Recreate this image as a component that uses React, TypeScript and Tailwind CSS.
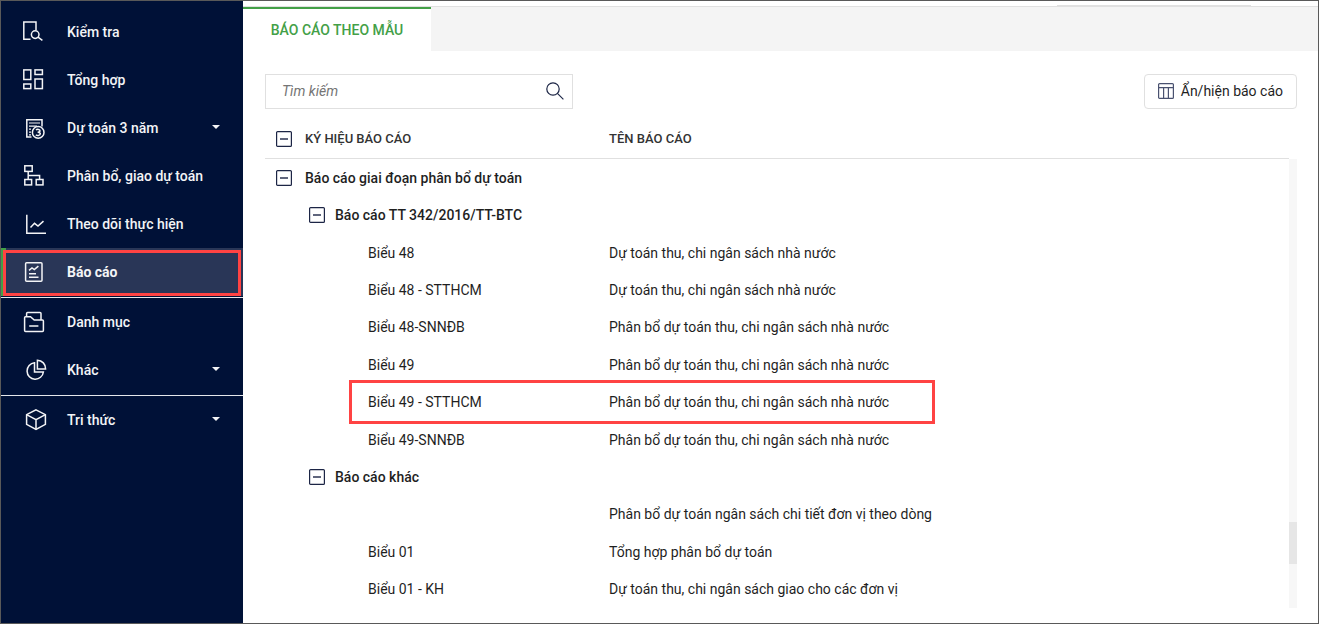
import type { ReactNode } from "react";
import { clsx } from "clsx";

interface NavItem {
  label: string;
  icon: ReactNode;
  iconClass: string;
  hasChildren?: boolean;
  active?: boolean;
}

interface ReportRow {
  level: number;
  code: string;
  name?: string;
  marked?: boolean;
}

const icon = (children: ReactNode) => (
  <svg
    width="22"
    height="22"
    viewBox="0 0 22 22"
    fill="none"
    stroke="currentColor"
    strokeWidth="1.5"
    aria-hidden="true"
  >
    {children}
  </svg>
);

const SearchDocIcon = icon(
  <>
    <path d="M8.5 18.2H1.8V1H14V9" />
    <circle cx="13.2" cy="13.6" r="3.8" />
    <path d="M16 16.2L20.4 19.4" />
  </>
);

const GridIcon = icon(
  <>
    <rect x="1.8" y="0.9" width="7" height="9.6" />
    <rect x="13" y="0.9" width="7.4" height="4.6" />
    <rect x="1.8" y="15" width="7" height="4.6" />
    <rect x="13" y="10" width="7.4" height="9.6" />
  </>
);

const ThreeYearIcon = icon(
  <>
    <path d="M6.5 20H1.8V2.8H17V9.5" />
    <path d="M4 6H15M4 9.2H12M4 12.2H6M4 15.2H6M4 17.8H6" strokeWidth="1.2" />
    <circle cx="13.2" cy="15.4" r="5.8" />
    <path d="M11 13C12 12 15.2 12.1 15 13.9C14.9 15.1 13.4 15.2 12.6 15.2C13.6 15.2 15.3 15.5 15.3 16.8C15.2 18.8 11.9 18.9 10.9 17.7" />
  </>
);

const TreeIcon = icon(
  <>
    <rect x="1.8" y="0.8" width="7.4" height="5.6" />
    <rect x="1.8" y="14.5" width="6.8" height="5.4" />
    <rect x="13.2" y="14.5" width="6.8" height="5.4" />
    <path d="M5.2 6.4V14.5M5.2 10.5H16.6V14.5" />
  </>
);

const ChartIcon = icon(
  <>
    <path d="M1.8 1.8V20.2H21" />
    <path d="M5.5 14.5L9.5 10.3L13 13.1L18.5 8.1" />
  </>
);

const ReportIcon = icon(
  <>
    <rect x="2.6" y="1.8" width="16.4" height="18.4" rx="1" />
    <path d="M6 9.3L9 7L11.3 8.6L15.4 5.2" />
    <path d="M6 12.8H13M6 16.2H15.5" />
  </>
);

const FolderIcon = icon(
  <>
    <path d="M2.5 5.8H7.5L11.2 9H19.4C20 9 20.4 9.4 20.4 10V19.6C20.4 20.2 20 20.6 19.4 20.6H2.6C2 20.6 1.6 20.2 1.6 19.6V6.8C1.6 6.2 2 5.8 2.5 5.8Z" />
    <path d="M3.6 5.8V2.6C3.6 2 4 1.6 4.6 1.6H17C17.6 1.6 18 2 18 2.6V9" />
    <path d="M6.2 15H15.4" />
  </>
);

const PieIcon = icon(
  <>
    <path d="M9.5 3.8A8.2 8.2 0 1 0 18.4 13H9.5Z" />
    <path d="M12.4 1.2V10H20.6A8.4 8.4 0 0 0 12.4 1.2Z" />
  </>
);

const CubeIcon = icon(
  <>
    <path d="M11 0.8L20.4 5.6V15.4L11 20.4L1.6 15.4V5.6Z" />
    <path d="M1.6 5.6L11 10.6L20.4 5.6M11 10.6V20.4" />
  </>
);

const navGroups: NavItem[][] = [
  [
    { label: "Kiểm tra", icon: SearchDocIcon, iconClass: "pl-[21px]" },
    { label: "Tổng hợp", icon: GridIcon, iconClass: "pl-[21px]" },
    { label: "Dự toán 3 năm", icon: ThreeYearIcon, iconClass: "pl-6", hasChildren: true },
    { label: "Phân bổ, giao dự toán", icon: TreeIcon, iconClass: "pl-[22px]" },
    { label: "Theo dõi thực hiện", icon: ChartIcon, iconClass: "pl-6" },
    { label: "Báo cáo", icon: ReportIcon, iconClass: "pl-[22px]", active: true },
  ],
  [
    { label: "Danh mục", icon: FolderIcon, iconClass: "pl-[22px]" },
    { label: "Khác", icon: PieIcon, iconClass: "pl-6", hasChildren: true },
  ],
  [{ label: "Tri thức", icon: CubeIcon, iconClass: "pl-6", hasChildren: true }],
];

const reports: ReportRow[] = [
  { level: 0, code: "Báo cáo giai đoạn phân bổ dự toán" },
  { level: 1, code: "Báo cáo TT 342/2016/TT-BTC" },
  { level: 2, code: "Biểu 48", name: "Dự toán thu, chi ngân sách nhà nước" },
  { level: 2, code: "Biểu 48 - STTHCM", name: "Dự toán thu, chi ngân sách nhà nước" },
  { level: 2, code: "Biểu 48-SNNĐB", name: "Phân bổ dự toán thu, chi ngân sách nhà nước" },
  { level: 2, code: "Biểu 49", name: "Phân bổ dự toán thu, chi ngân sách nhà nước" },
  { level: 2, code: "Biểu 49 - STTHCM", name: "Phân bổ dự toán thu, chi ngân sách nhà nước", marked: true },
  { level: 2, code: "Biểu 49-SNNĐB", name: "Phân bổ dự toán thu, chi ngân sách nhà nước" },
  { level: 1, code: "Báo cáo khác" },
  { level: 2, code: "", name: "Phân bổ dự toán ngân sách chi tiết đơn vị theo dòng" },
  { level: 2, code: "Biểu 01", name: "Tổng hợp phân bổ dự toán" },
  { level: 2, code: "Biểu 01 - KH", name: "Dự toán thu, chi ngân sách giao cho các đơn vị" },
];

function ToggleButton({ label }: { label: string }) {
  return (
    <button type="button" aria-label={label} className="block shrink-0 text-[#1c2545]">
      <svg width="16" height="16" viewBox="0 0 16 16" fill="none" stroke="currentColor" aria-hidden="true">
        <rect x="0.6" y="0.6" width="14.8" height="14.8" rx="1" strokeWidth="1.2" />
        <path d="M4 8H12" strokeWidth="1.4" />
      </svg>
    </button>
  );
}

function Sidebar() {
  return (
    <nav className="w-[242px] shrink-0 bg-[#001137] pt-[7px] text-sm font-medium text-gray-100">
      {navGroups.map((group, index) => (
        <ul
          key={index}
          className={clsx(index < navGroups.length - 1 && "border-b border-gray-200 pb-px")}
        >
          {group.map((item) => (
            <li key={item.label}>
              <a
                href="#"
                className={clsx(
                  "relative flex h-12 items-center pb-px",
                  item.active && "bg-[#293657] font-bold shadow-[inset_5px_0_0_#43a047]"
                )}
              >
                <span className={clsx("w-[66px] shrink-0", item.iconClass)}>{item.icon}</span>
                <span className="flex-1">{item.label}</span>
                {item.hasChildren && (
                  <svg width="8" height="4" viewBox="0 0 8 4" className="mr-[23px] mb-0.5" fill="currentColor" aria-hidden="true">
                    <path d="M0 0H8L4 4Z" />
                  </svg>
                )}
                {item.active && (
                  <span className="absolute inset-x-[2px] top-[2px] bottom-0 border-3 border-[#ff4343]" />
                )}
              </a>
            </li>
          ))}
        </ul>
      ))}
    </nav>
  );
}

function Toolbar() {
  return (
    <div className="flex items-center justify-between">
      <label className="flex h-[35px] w-[308px] items-center border border-[#e0e0e0] pr-2 pb-0.5 pl-4">
        <input
          type="text"
          aria-label="Tìm kiếm"
          placeholder="Tìm kiếm"
          className="min-w-0 flex-1 text-sm outline-none placeholder:text-[#757575] placeholder:italic"
        />
        <svg width="18" height="18" viewBox="0 0 18 18" fill="none" stroke="#1c2545" strokeWidth="1.2" aria-hidden="true">
          <circle cx="7" cy="7" r="6.2" />
          <path d="M11.4 11.4L17.4 17.4" />
        </svg>
      </label>
      <button
        type="button"
        className="flex h-[35px] items-center gap-[7px] rounded border border-[#e0e0e0] px-[13px] pb-0.5 text-sm text-[#1f1f1f]"
      >
        <svg width="16" height="16" viewBox="0 0 16 16" fill="none" stroke="#4a5270" strokeWidth="1.2" aria-hidden="true">
          <rect x="0.6" y="0.6" width="14.8" height="14.8" rx="1" />
          <path d="M0.6 4.6H15.4M5.6 4.6V15.4M10.4 4.6V15.4" />
        </svg>
        Ẩn/hiện báo cáo
      </button>
    </div>
  );
}

function ReportTable() {
  return (
    <div className="mt-[11px] flex">
      <table className="h-[488px] flex-1 table-fixed border-separate border-spacing-0 text-left text-sm text-[#1f1f1f]">
        <thead>
          <tr className="h-[39px] text-[13px] text-[#333]">
            <th className="w-[344px] border-b border-[#e0e0e0] p-0 pl-[11px] font-medium">
              <div className="flex items-center gap-[13px]">
                <ToggleButton label="Thu gọn tất cả" />
                KÝ HIỆU BÁO CÁO
              </div>
            </th>
            <th className="border-b border-[#e0e0e0] p-0 font-medium">TÊN BÁO CÁO</th>
          </tr>
        </thead>
        <tbody>
          {reports.map((row, index) => (
            <tr key={index} className="relative">
              <td
                className={clsx(
                  "p-0",
                  row.level === 0 && "pl-[11px]",
                  row.level === 1 && "pl-11",
                  row.level === 2 && "pl-[103px]"
                )}
              >
                {row.marked && (
                  <span className="absolute -top-[3px] -bottom-[3px] left-[84px] w-[586px] border-3 border-[#ff4343]" />
                )}
                {row.level < 2 ? (
                  <div className={clsx("flex items-center font-medium", row.level === 0 ? "gap-[13px]" : "gap-[10px]")}>
                    <ToggleButton label={`Thu gọn ${row.code}`} />
                    {row.code}
                  </div>
                ) : (
                  row.code
                )}
              </td>
              <td className="p-0">{row.name}</td>
            </tr>
          ))}
        </tbody>
      </table>
      {/* scroll track */}
      <div className="mt-[39px] flex w-2 flex-col bg-[#f7f7f7]">
        <div className="flex-1" />
        <div className="mb-[44px] h-[42px] bg-[#e6e6e6]" />
      </div>
    </div>
  );
}

export default function App() {
  return (
    <div className="flex min-h-screen border border-[#595959] bg-white font-['Roboto','Liberation_Sans',sans-serif]">
      <Sidebar />
      <main className="min-w-0 flex-1">
        <div className="flex h-[6px] items-end justify-end border-b border-[#e0e0e0] pr-[67px]">
          <div className="h-px w-[194px] bg-[#e0e0e0]" />
        </div>
        <div className="flex h-11 bg-[#f4f4f4]">
          <button
            type="button"
            className="w-[188px] border-t-2 border-[#43a047] bg-white text-center text-sm font-medium text-[#43a047]"
          >
            BÁO CÁO THEO MẪU
          </button>
        </div>
        <div className="pt-[23px] pr-[21px] pb-[15px] pl-[22px]">
          <Toolbar />
          <ReportTable />
        </div>
      </main>
    </div>
  );
}
